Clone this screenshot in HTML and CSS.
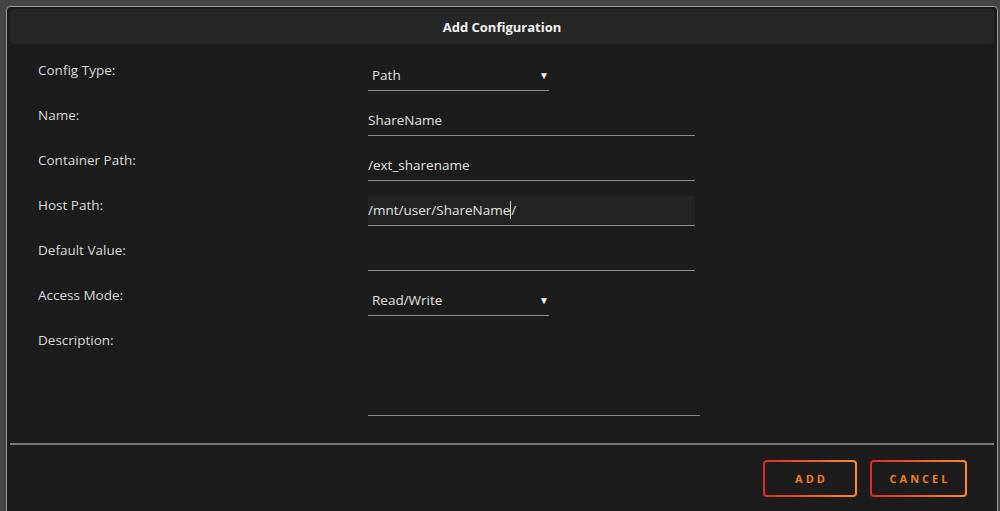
FILE: index.html
```html
<!DOCTYPE html>
<html lang="en">
<head>
  <meta charset="UTF-8">
  <title>Add Configuration</title>
  <link rel="stylesheet" href="styles.css">
</head>
<body>
  <div class="dialog">
    <div class="dialog-title">Add Configuration</div>

    <div class="form">
      <div class="label">Config Type:</div>
      <div class="field select"><span>Path</span><span class="arrow">&#9660;</span></div>

      <div class="label">Name:</div>
      <div class="field text">ShareName</div>

      <div class="label">Container Path:</div>
      <div class="field text">/ext_sharename</div>

      <div class="label">Host Path:</div>
      <div class="field text focused">/mnt/user/ShareName<span class="caret"></span>/</div>

      <div class="label">Default Value:</div>
      <div class="field text"></div>

      <div class="label">Access Mode:</div>
      <div class="field select"><span>Read/Write</span><span class="arrow">&#9660;</span></div>

      <div class="label">Description:</div>
      <div class="field textarea"></div>
    </div>

    <div class="separator"></div>

    <div class="actions">
      <button class="btn">ADD</button>
      <button class="btn">CANCEL</button>
    </div>
  </div>
</body>
</html>
```

FILE: styles.css
```css
html, body {
  margin: 0;
  padding: 0;
  height: 100%;
  overflow: hidden;
  background: #454545;
  font-family: "Open Sans", "Liberation Sans", sans-serif;
  font-size: 13.5px;
}
body {
  padding: 6px 2px 0 6px;
  box-sizing: border-box;
}
.dialog {
  background: #1c1c1c;
  border: 1px solid #9a9a9a;
  border-radius: 4px;
  padding: 2px 3px 0 3px;
  height: 560px;
}
.dialog-title {
  background: #262626;
  border-radius: 4px;
  height: 35px;
  line-height: 36px;
  text-align: center;
  color: #f2f2f2;
  font-size: 13px;
  font-weight: bold;
}
.form {
  display: grid;
  grid-template-columns: 330px 1fr;
  row-gap: 15px;
  padding: 17px 0 0 28px;
}
.label {
  color: #d9d9d9;
  line-height: 18px;
}
.field {
  box-sizing: border-box;
  height: 30px;
  border-bottom: 1px solid #8c8c8c;
  color: #e2e2e2;
  line-height: 29px;
}
.text {
  width: 327px;
}
.focused {
  background: #232323;
}
.caret {
  display: inline-block;
  width: 1px;
  height: 18px;
  background: #e2e2e2;
  vertical-align: -4px;
}
.select {
  width: 181px;
  display: flex;
  justify-content: space-between;
  padding: 0 0 0 4px;
}
.arrow {
  font-size: 10px;
  color: #f2f2f2;
}
.textarea {
  width: 332px;
  height: 85px;
}
.separator {
  height: 2px;
  background: #777;
  margin-top: 27px;
}
.actions {
  display: flex;
  justify-content: flex-end;
  gap: 13px;
  padding: 15px 27px 0 0;
}
.btn {
  box-sizing: border-box;
  height: 37px;
  border: 2px solid transparent;
  border-radius: 4px;
  background: linear-gradient(#1c1c1c, #1c1c1c) padding-box,
              linear-gradient(90deg, #e22a2a, #ff8a2c) border-box;
  color: #f0801e;
  font-family: "Open Sans", "Liberation Sans", sans-serif;
  font-size: 11px;
  font-weight: bold;
  letter-spacing: 3px;
  padding: 0 0 0 3px;
}
.btn:first-child {
  width: 94px;
}
.btn:last-child {
  width: 97px;
}
```
